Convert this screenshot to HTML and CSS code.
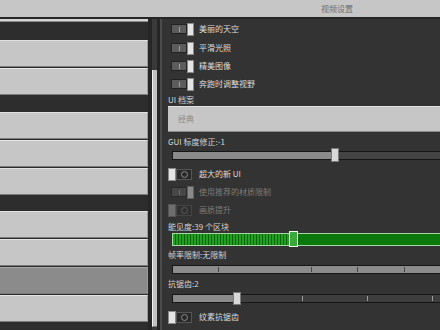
FILE: index.html
```html
<!DOCTYPE html>
<html>
<head>
<meta charset="utf-8">
<link rel="stylesheet" href="styles.css">
</head>
<body>
<div class="screen">
  <div class="topbar"><span class="title">视频设置</span></div>
  <div class="main">
    <div class="list">
      <div class="btn-tail"></div>
      <div class="group g1"><div class="btn"></div><div class="btn"></div></div>
      <div class="group g2"><div class="btn"></div><div class="btn"></div><div class="btn"></div></div>
      <div class="group g3"><div class="btn"></div><div class="btn"></div><div class="btn btn-dim"></div><div class="btn"></div></div>
    </div>
    <div class="scrollbar"><div class="scroll-track"><div class="thumb"></div></div></div>
    <div class="panel">
      <div class="row r20"><div class="slot"><div class="tg-on"><div class="track"></div><div class="knob"></div></div></div><span class="lbl">美丽的天空</span></div>
      <div class="row r18"><div class="slot"><div class="tg-on"><div class="track"></div><div class="knob"></div></div></div><span class="lbl">平滑光照</span></div>
      <div class="row r18"><div class="slot"><div class="tg-on"><div class="track"></div><div class="knob"></div></div></div><span class="lbl">精美图像</span></div>
      <div class="row r18"><div class="slot"><div class="tg-on"><div class="track"></div><div class="knob"></div></div></div><span class="lbl">奔跑时调整视野</span></div>
      <div class="cap c13">UI 档案</div>
      <div class="select">经典</div>
      <div class="cap c13 mt3">GUI 标度修正:-1</div>
      <div class="slider s14">
        <div class="trk">
          <div class="fill" style="width:158px"></div>
          <div class="knob-s k14"></div>
          <div class="rest"></div>
        </div>
      </div>
      <div class="row r24"><div class="slot"><div class="tg-off"><div class="knob"></div><div class="track"></div></div></div><span class="lbl">超大的新 UI</span></div>
      <div class="row r12 dis"><div class="slot"><div class="tg-on"><div class="track"></div><div class="knob"></div></div></div><span class="lbl">使用推荐的材质限制</span></div>
      <div class="row r24 dis"><div class="slot"><div class="tg-off"><div class="knob"></div><div class="track"></div></div></div><span class="lbl">画质提升</span></div>
      <div class="cap c9">能见度:39 个区块</div>
      <div class="slider s16">
        <div class="trk green">
          <div class="fill stripes" style="width:116px"></div>
          <div class="knob-g"></div>
          <div class="rest rest-g"></div>
        </div>
      </div>
      <div class="cap c16">帧率限制:无限制</div>
      <div class="slider s12">
        <div class="trk">
          <div class="rest fps"></div>
        </div>
      </div>
      <div class="cap c17">抗锯齿:2</div>
      <div class="slider s13">
        <div class="trk">
          <div class="fill" style="width:60px"></div>
          <div class="knob-s k13"></div>
          <div class="rest aa"></div>
        </div>
      </div>
      <div class="row r24"><div class="slot"><div class="tg-off"><div class="knob"></div><div class="track"></div></div></div><span class="lbl">纹素抗锯齿</span></div>
    </div>
  </div>
</div>
</body>
</html>
```

FILE: styles.css
```css
* { box-sizing: border-box; margin: 0; padding: 0; }
html, body { width: 440px; height: 330px; overflow: hidden; background: #333; }
body {
  font-family: "Noto Sans CJK SC", "DejaVu Sans", sans-serif;
  font-size: 8px;
  line-height: 1;
  color: #d8d8d8;
}
.screen { display: flex; flex-direction: column; height: 330px; }
.topbar {
  height: 19px; flex: none;
  background: #c6c6c6;
  border-bottom: 2px solid #262626;
  padding-left: 321px;
  display: flex; align-items: center;
}
.title { color: #6e6e6e; }

.main { flex: 1; display: flex; min-height: 0; }

.list { width: 148px; flex: none; background: #2d2d2d; display: flex; flex-direction: column; }
.btn-tail { height: 3px; flex: none; background: #d4d4d4; border-bottom: 1px solid #8a8a8a; }
.group { display: flex; flex-direction: column; gap: 1px; }
.g1 { margin-top: 18px; }
.g2 { margin-top: 17px; }
.g3 { margin-top: 16px; }
.btn {
  height: 27px; flex: none;
  background: #c6c6c6;
  border-top: 1px solid #e2e2e2;
  border-bottom: 1px solid #7a7a7a;
  border-right: 1px solid #9a9a9a;
}
.btn-dim { background: #8b8b8b; border-top-color: #a8a8a8; }

.scrollbar { width: 12px; flex: none; background: #262626; padding-left: 4px; padding-right: 3px; }
.scroll-track { height: 100%; background: #3a3a3a; padding-top: 51px; }
.thumb { height: 257px; background: #c2c2c2; border-left: 1px solid #f0f0f0; border-bottom: 1px solid #777; }

.panel {
  flex: 1; min-width: 0; overflow: hidden;
  border-left: 2px solid #4c4c4c;
  padding-left: 6px;
  background: #333;
  display: flex; flex-direction: column;
}

.row { display: flex; align-items: center; flex: none; }
.r20 { height: 20px; }
.r18 { height: 18px; }
.r24 { height: 24px; }
.r12 { height: 12px; }

.slot { width: 31px; flex: none; display: flex; align-items: center; }
.lbl { color: #dcdcdc; white-space: nowrap; }
.dis .lbl { color: #7c7c7c; }

.tg-on { margin-left: 3px; display: flex; align-items: center; }
.tg-on .track {
  width: 16px; height: 10px;
  background: #5c5c5c; border: 1px solid #222;
  display: flex; align-items: center; justify-content: center;
}
.tg-on .track::after { content: ""; width: 1px; height: 5px; background: #a0a0a0; }
.tg-on .knob { width: 7px; height: 13px; background: #e4e4e4; border: 1px solid #8a8a8a; }

.tg-off { display: flex; align-items: center; }
.tg-off .knob { width: 8px; height: 13px; background: #e4e4e4; border: 1px solid #8a8a8a; }
.tg-off .track {
  width: 16px; height: 11px;
  background: #2a2a2a; border: 1px solid #555;
  display: flex; align-items: center; justify-content: center;
}
.tg-off .track::after { content: ""; width: 5px; height: 5px; border: 1px solid #8a8a8a; border-radius: 50%; }

.dis .tg-on .track { background: #474747; border-color: #2a2a2a; }
.dis .tg-on .track::after { background: #6a6a6a; }
.dis .tg-on .knob { background: #8a8a8a; border-color: #5e5e5e; }
.dis .tg-off .knob { background: #6e6e6e; border-color: #555; }
.dis .tg-off .track { background: #303030; border-color: #444; }
.dis .tg-off .track::after { border-color: #5a5a5a; }

.cap { display: flex; align-items: center; flex: none; color: #d4d4d4; white-space: nowrap; }
.c13 { height: 13px; }
.c9 { height: 9px; }
.c16 { height: 16px; }
.c17 { height: 17px; }
.mt3 { margin-top: 3px; }

.select {
  height: 26px; flex: none;
  margin-right: -20px;
  background: #c6c6c6;
  border-top: 1px solid #e0e0e0;
  border-bottom: 1px solid #8a8a8a;
  display: flex; align-items: center;
  padding-left: 10px;
  color: #8a8a8a;
}

.slider { display: flex; align-items: center; flex: none; margin-left: 4px; margin-right: -20px; }
.s14 { height: 14px; }
.s16 { height: 16px; }
.s12 { height: 12px; }
.s13 { height: 13px; }

.trk { height: 9px; width: 100%; display: flex; align-items: center; border: 1px solid #161616; }
.fill { height: 100%; flex: none; background: #8a8a8a; }
.rest { flex: 1; height: 100%; background: #444; }
.knob-s { width: 8px; flex: none; background: #d8d8d8; border: 1px solid #7a7a7a; }
.k14 { height: 14px; }
.k13 { height: 13px; }

.trk.green { height: 13px; border: 1px solid #a6d6a6; }
.stripes { background: repeating-linear-gradient(90deg, #22a022 0 2px, #0a640a 2px 3px); }
.knob-g { width: 9px; height: 16px; flex: none; background: #3aa83a; border: 1px solid #e8ffe8; }
.rest-g { background: #0a780a; }

.fps {
  background-color: #8c8c8c;
  background-image: repeating-linear-gradient(90deg, transparent 0 45px, #474747 45px 46px, transparent 46px 46.5px);
  background-size: 100% 5px;
  background-position: 0 center;
  background-repeat: no-repeat;
}
.aa {
  background-color: #3e3e3e;
  background-image: repeating-linear-gradient(90deg, transparent 0 61px, #9a9a9a 61px 62px, transparent 62px 65px);
  background-size: 100% 5px;
  background-position: 0 center;
  background-repeat: no-repeat;
}
```
